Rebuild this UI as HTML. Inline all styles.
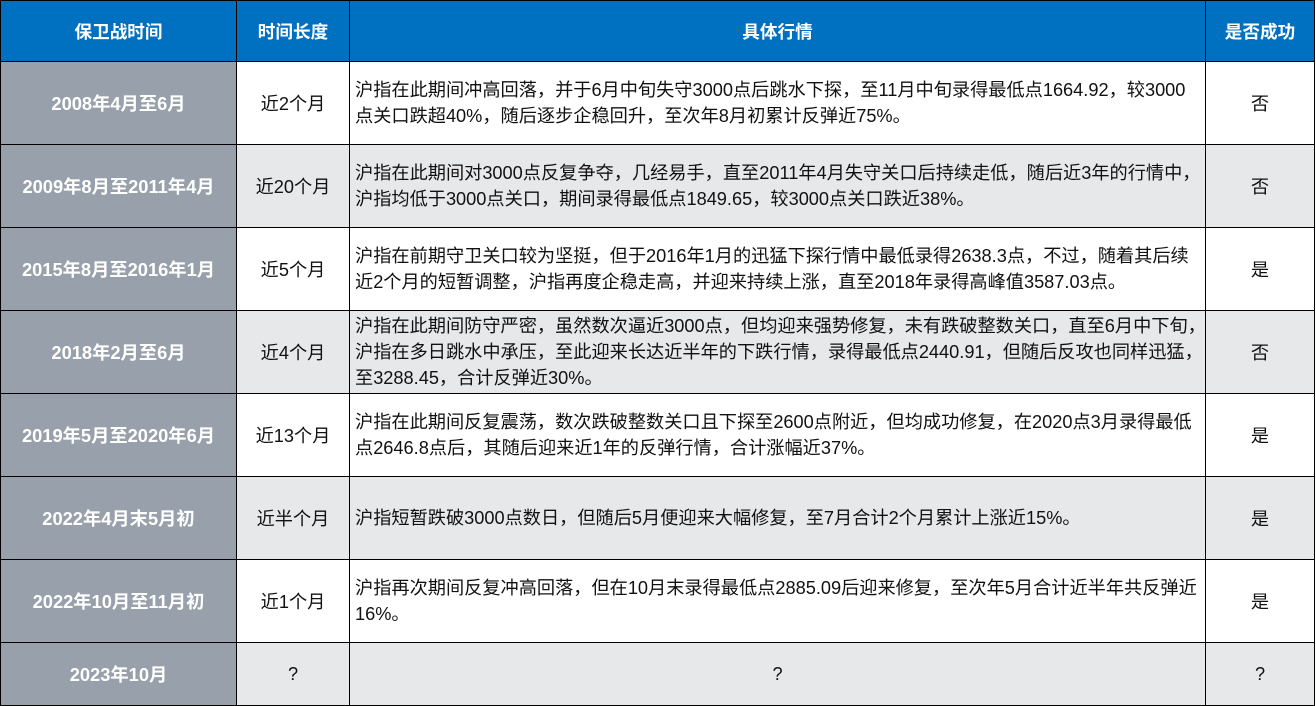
<!DOCTYPE html>
<html><head><meta charset="utf-8"><style>
body{margin:0;width:1316px;height:706px;background:#fff;position:relative;overflow:hidden;font-family:"Liberation Sans","Noto Sans CJK SC",sans-serif;}
.c{position:absolute;box-sizing:border-box;display:flex;align-items:center;justify-content:center;font-size:18.2px;color:#111;border-right:1.5px solid #000;border-bottom:1.5px solid #000;}
.h{background:#0070c0;color:#fff;font-weight:bold;font-size:17.6px;}
.g{background:#98a1ab;color:#fff;font-weight:bold;font-size:18.3px;}
.t{justify-content:flex-start;text-align:left;padding:0 4px 0 5px;line-height:26px;white-space:nowrap;}
.l{background:#e7e8ea;}
</style></head><body>
<div id="r"></div>
<script>
const cols=[0,237,350,1206,1315];
const rows=[0,62,145,228,311,394,477,560,643,706];
const data=[
["保卫战时间","时间长度","具体行情","是否成功"],
["2008年4月至6月","近2个月","<div>沪指在此期间冲高回落，并于6月中旬失守3000点后跳水下探，至11月中旬录得最低点1664.92，较3000<br>点关口跌超40%，随后逐步企稳回升，至次年8月初累计反弹近75%。</div>","否"],
["2009年8月至2011年4月","近20个月","<div>沪指在此期间对3000点反复争夺，几经易手，直至2011年4月失守关口后持续走低，随后近3年的行情中，<br>沪指均低于3000点关口，期间录得最低点1849.65，较3000点关口跌近38%。</div>","否"],
["2015年8月至2016年1月","近5个月","<div>沪指在前期守卫关口较为坚挺，但于2016年1月的迅猛下探行情中最低录得2638.3点，不过，随着其后续<br>近2个月的短暂调整，沪指再度企稳走高，并迎来持续上涨，直至2018年录得高峰值3587.03点。</div>","是"],
["2018年2月至6月","近4个月","<div>沪指在此期间防守严密，虽然数次逼近3000点，但均迎来强势修复，未有跌破整数关口，直至6月中下旬，<br>沪指在多日跳水中承压，至此迎来长达近半年的下跌行情，录得最低点2440.91，但随后反攻也同样迅猛，<br>至3288.45，合计反弹近30%。</div>","否"],
["2019年5月至2020年6月","近13个月","<div>沪指在此期间反复震荡，数次跌破整数关口且下探至2600点附近，但均成功修复，在2020点3月录得最低<br>点2646.8点后，其随后迎来近1年的反弹行情，合计涨幅近37%。</div>","是"],
["2022年4月末5月初","近半个月","<div>沪指短暂跌破3000点数日，但随后5月便迎来大幅修复，至7月合计2个月累计上涨近15%。</div>","是"],
["2022年10月至11月初","近1个月","<div>沪指再次期间反复冲高回落，但在10月末录得最低点2885.09后迎来修复，至次年5月合计近半年共反弹近<br>16%。</div>","是"],
["2023年10月","?","?","?"]];
let h='';
data.forEach((r,i)=>{r.forEach((t,j)=>{
let cls='c';
if(i==0)cls+=' h';else if(j==0)cls+=' g';else{if(i%2==0)cls+=' l';if(j==2&&i<8)cls+=' t';}
const x=cols[j],y=rows[i],w=cols[j+1]-x,hh=rows[i+1]-y;
let st=`left:${x}px;top:${y}px;width:${w}px;height:${hh}px;`;
if(j==0)st+='border-left:1.5px solid #000;';
if(i==0)st+='border-top:1px solid #000;';
h+=`<div class="${cls}" style="${st}">${t}</div>`;})});
document.getElementById('r').outerHTML=h;
</script>
</body></html>
